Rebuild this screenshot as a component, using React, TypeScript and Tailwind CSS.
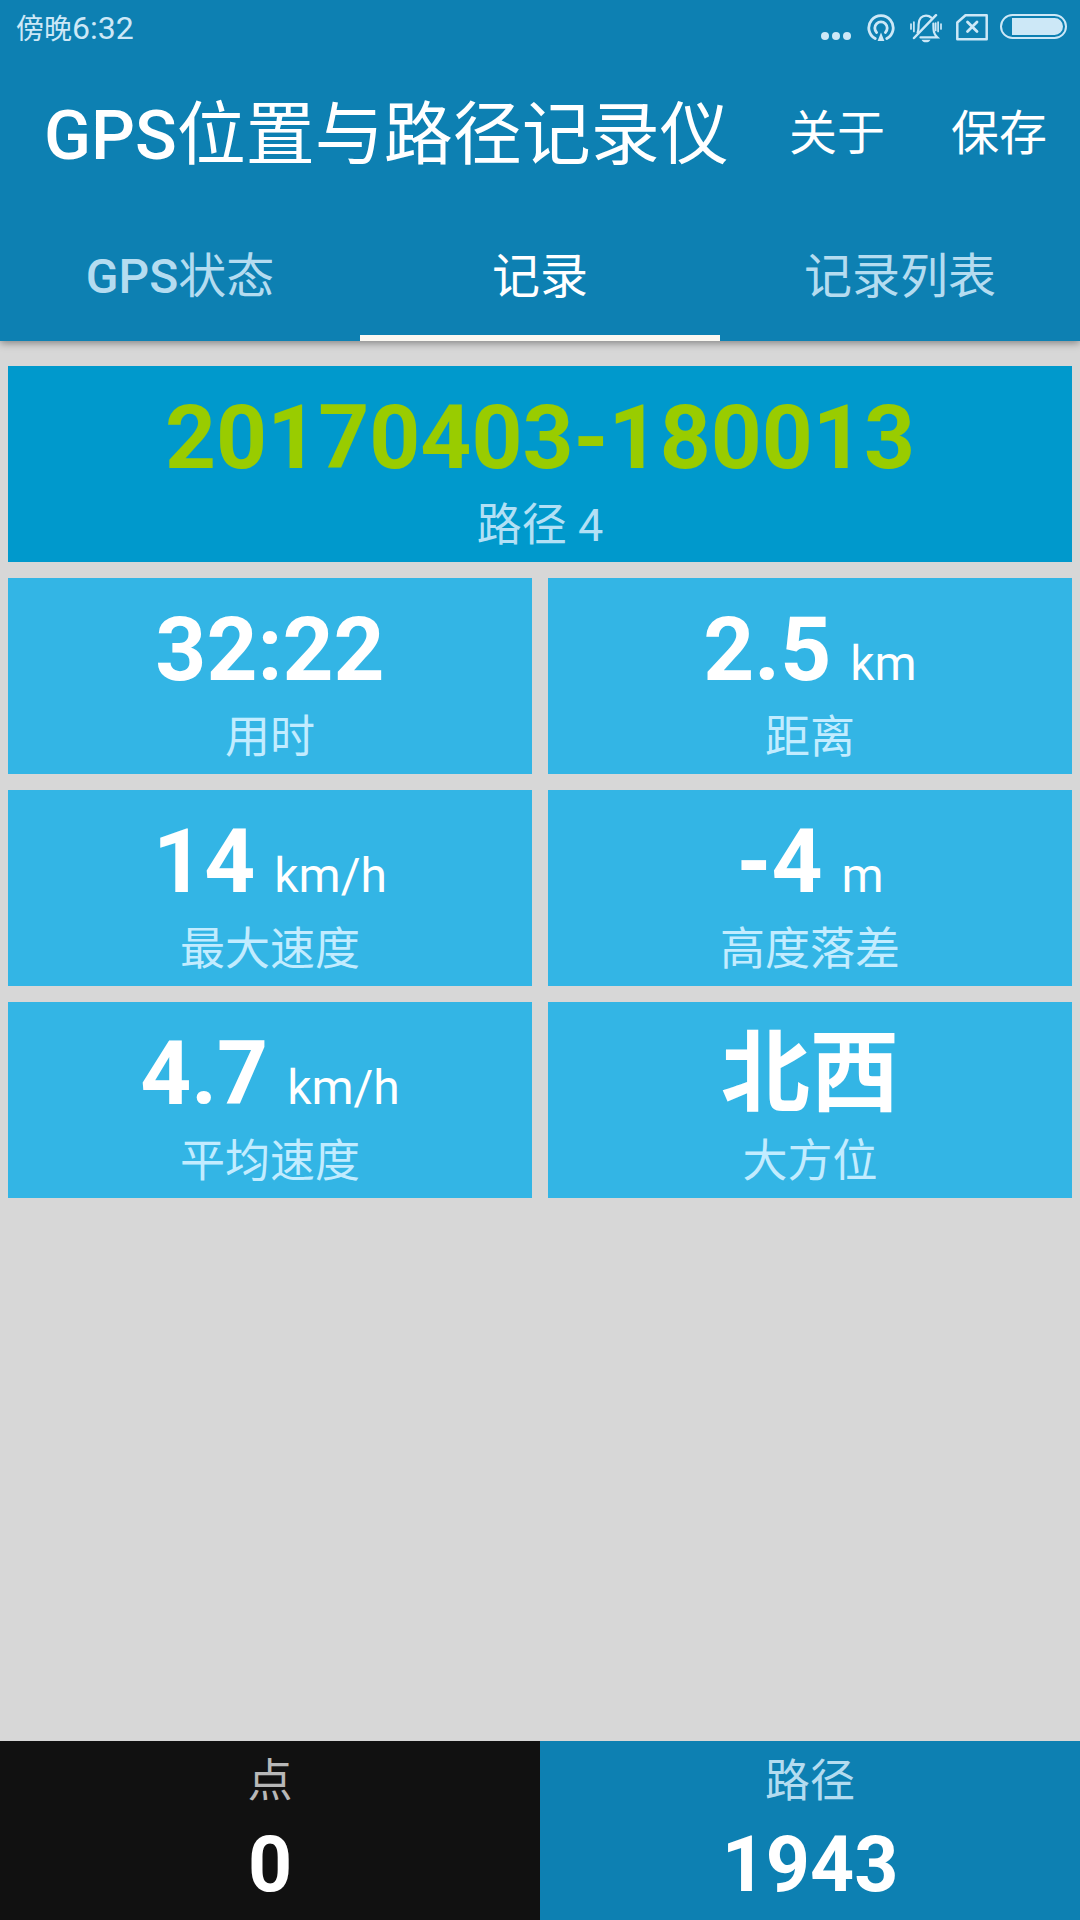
import React from "react";

type Stat = { value: string; unit?: string; label: string };

const STATS: Stat[] = [
  { value: "32:22", label: "用时" },
  { value: "2.5", unit: "km", label: "距离" },
  { value: "14", unit: "km/h", label: "最大速度" },
  { value: "-4", unit: "m", label: "高度落差" },
  { value: "4.7", unit: "km/h", label: "平均速度" },
  { value: "北西", label: "大方位" },
];

function MoreIcon() {
  return (
    <svg width="30" height="28" viewBox="0 0 30 28" fill="currentColor" aria-hidden="true">
      <circle cx="4" cy="22" r="4" />
      <circle cx="15" cy="22" r="4" />
      <circle cx="26" cy="22" r="4" />
    </svg>
  );
}

function HotspotIcon() {
  return (
    <svg width="28" height="28" viewBox="0 0 28 28" fill="none" stroke="currentColor" strokeWidth="2.8" strokeLinecap="round" aria-hidden="true">
      <path d="M8.2 24.6A12.2 12.2 0 1 1 19.8 24.6" />
      <path d="M9.6 18.4A6.2 6.2 0 1 1 18.4 18.4" />
      <path d="M14 18.5L17.4 27H10.6Z" fill="currentColor" stroke="none" />
    </svg>
  );
}

function MutedBellIcon() {
  return (
    <svg width="32" height="29" viewBox="0 0 32 29" fill="none" stroke="currentColor" strokeWidth="2.2" strokeLinecap="round" aria-hidden="true">
      <path d="M7.6 18.5C8.6 16.5 8.6 14.5 8.6 10.5C8.6 4.5 12 1.6 16 1.6C18.2 1.6 20 2.3 21.3 3.6" />
      <path d="M23.4 9.5C23.4 17 23.6 20 27.3 23.4H10.5" />
      <path d="M26 1.2L4 24" strokeWidth="2.5" />
      <path d="M11.5 25.8H20.5C19.4 29.2 12.6 29.2 11.5 25.8Z" fill="currentColor" stroke="none" />
      <path d="M1 10V15M3.9 8V17.5M31 10V15M28.1 8V17.5M25.7 9V16.5" strokeWidth="1.7" />
    </svg>
  );
}

function NoSimIcon() {
  return (
    <svg width="32" height="27" viewBox="0 0 32 27" fill="none" stroke="currentColor" strokeLinejoin="round" aria-hidden="true">
      <path d="M9.5 1.3H30.7V25.2H1.3V8.5Z" strokeWidth="2.5" />
      <path d="M11.5 8L21 17.5M21 8L11.5 17.5" strokeWidth="2.8" strokeLinecap="round" />
    </svg>
  );
}

function BatteryIcon() {
  return (
    <svg width="67" height="25" viewBox="0 0 67 25" fill="none" aria-hidden="true">
      <rect x="1" y="1" width="65" height="23" rx="11.5" stroke="currentColor" strokeWidth="2" />
      <path d="M12 4H54.5A8.5 8.5 0 0 1 54.5 21H12Z" fill="currentColor" />
    </svg>
  );
}

function StatCard({ value, unit, label }: Stat) {
  return (
    <div className="flex flex-col items-center bg-[#33b5e5] pt-[19px] pb-[10px]">
      <p className="flex items-baseline gap-[19px] text-white">
        <span className="text-[89px] leading-[106px] font-bold">{value}</span>
        {unit && <span className="text-[48px] leading-[56px]">{unit}</span>}
      </p>
      <p className="mt-[9px] text-[45px] leading-[52px] text-[#c2ecff]">{label}</p>
    </div>
  );
}

export default function App() {
  return (
    <div className="flex min-h-screen flex-col bg-[#d7d7d7] font-[Roboto,'Noto_Sans_CJK_SC',sans-serif]">
      <header className="relative bg-[#0d80b2] text-white shadow-[0_2px_8px_rgba(0,0,0,0.4)]">
        <div className="flex h-[60px] items-start justify-between pl-4 pr-[13px] pt-[14px] text-[#cde8f7]">
          <span className="flex items-baseline leading-[28px]">
            <span className="text-[28px]">傍晚</span>
            <span className="text-[32px]">6:32</span>
          </span>
          <div className="flex items-start">
            <MoreIcon />
            <span className="ml-4"><HotspotIcon /></span>
            <span className="ml-[15px]"><MutedBellIcon /></span>
            <span className="ml-[14px]"><NoSimIcon /></span>
            <span className="ml-3"><BatteryIcon /></span>
          </div>
        </div>

        <div className="flex h-36 items-center pt-1 pl-11 pr-[33px]">
          <h1 className="grow whitespace-nowrap pt-1 text-[69px] leading-[80px]">
            <span className="font-medium">GPS</span>位置与路径记录仪
          </h1>
          <div className="flex gap-[66px] text-[48px] leading-[56px]">
            <button type="button" className="whitespace-nowrap">关于</button>
            <button type="button" className="whitespace-nowrap">保存</button>
          </div>
        </div>

        <div role="tablist" className="grid grid-cols-3 text-[48px] leading-[56px]">
          <button type="button" role="tab" aria-selected="false" className="border-b-6 border-transparent pt-[45px] pb-[30px] text-[#b4dcf0]">
            <span className="font-medium">GPS</span>状态
          </button>
          <button type="button" role="tab" aria-selected="true" className="border-b-6 border-[#faf8f2] pt-[45px] pb-[30px]">
            记录
          </button>
          <button type="button" role="tab" aria-selected="false" className="border-b-6 border-transparent pt-[45px] pb-[30px] text-[#b4dcf0]">
            记录列表
          </button>
        </div>
      </header>

      <main className="grid grow auto-rows-min grid-cols-2 gap-4 px-2 pt-[25px] pb-4">
        <section className="col-span-2 flex flex-col items-center bg-[#0099cc] pt-[19px] pb-[10px]">
          <h2 className="text-[89px] leading-[106px] font-bold text-[#99cc00]">20170403-180013</h2>
          <p className="mt-[9px] text-[45px] leading-[52px] text-[#b2e0f5]">路径 4</p>
        </section>
        {STATS.map((s) => (
          <StatCard key={s.label} {...s} />
        ))}
      </main>

      <footer className="grid grid-cols-2 text-center">
        <div className="bg-[#111111] pt-[15px] pb-[9px]">
          <p className="text-[45px] leading-[52px] text-[#b8b8b8]">点</p>
          <p className="mt-[11px] text-[77px] leading-[92px] font-bold text-white">0</p>
        </div>
        <div className="bg-[#0d80b2] pt-[15px] pb-[9px]">
          <p className="text-[45px] leading-[52px] text-[#b4dcf0]">路径</p>
          <p className="mt-[11px] text-[77px] leading-[92px] font-bold text-white">1943</p>
        </div>
      </footer>
    </div>
  );
}
